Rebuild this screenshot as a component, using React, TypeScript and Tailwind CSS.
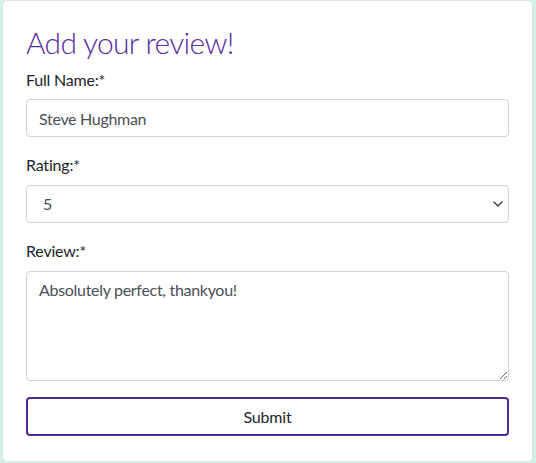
import { ChevronDown } from "lucide-react";

const FIELD =
  "w-full h-[38px] rounded-[4px] border border-[#ced4da] bg-white px-[12px] text-[16px] tracking-[-0.3px] text-[#495057] outline-none";

const LABEL = "block text-[16px] leading-[24px] tracking-[-0.2px] text-[#212529]";

export default function App() {
  return (
    <div
      className="w-[536px] h-[463px] bg-[#d3f1e9] pl-[2px] pr-[3px] pb-[1px]"
      style={{ fontFamily: "Lato, 'Noto Sans', sans-serif" }}
    >
      <div className="h-full rounded-[5px] border border-[#dee2e6] bg-white px-[23px] pt-[23px]">
        {/* heading */}
        <h2 className="text-[30px] leading-[36px] font-light tracking-[-0.7px] text-[#5a2ca0] mb-[8px]">
          Add your review!
        </h2>

        {/* name */}
        <label className={`${LABEL} mb-[7px]`}>Full Name:*</label>
        <input className={FIELD} defaultValue="Steve Hughman" />

        {/* rating */}
        <label className={`${LABEL} mt-[16px] mb-[8px]`}>Rating:*</label>
        <div className="relative">
          <select className={`${FIELD} appearance-none pl-[16px]`} defaultValue="5">
            <option>1</option>
            <option>2</option>
            <option>3</option>
            <option>4</option>
            <option>5</option>
          </select>
          <ChevronDown
            size={16}
            strokeWidth={2}
            className="absolute right-[3px] top-[11px] text-[#343a40] pointer-events-none"
          />
        </div>

        {/* review */}
        <label className={`${LABEL} mt-[16px] mb-[8px]`}>Review:*</label>
        <textarea
          className="block w-full h-[110px] rounded-[4px] border border-[#ced4da] bg-white px-[12px] py-[6px] text-[16px] leading-[24px] tracking-[-0.3px] text-[#495057] outline-none"
          defaultValue="Absolutely perfect, thankyou!"
        />

        {/* submit */}
        <button className="mt-[16px] w-full h-[39px] rounded-[4px] border-2 border-[#4f2a96] bg-white text-[16px] tracking-[-0.2px] text-[#212529]">
          Submit
        </button>
      </div>
    </div>
  );
}
